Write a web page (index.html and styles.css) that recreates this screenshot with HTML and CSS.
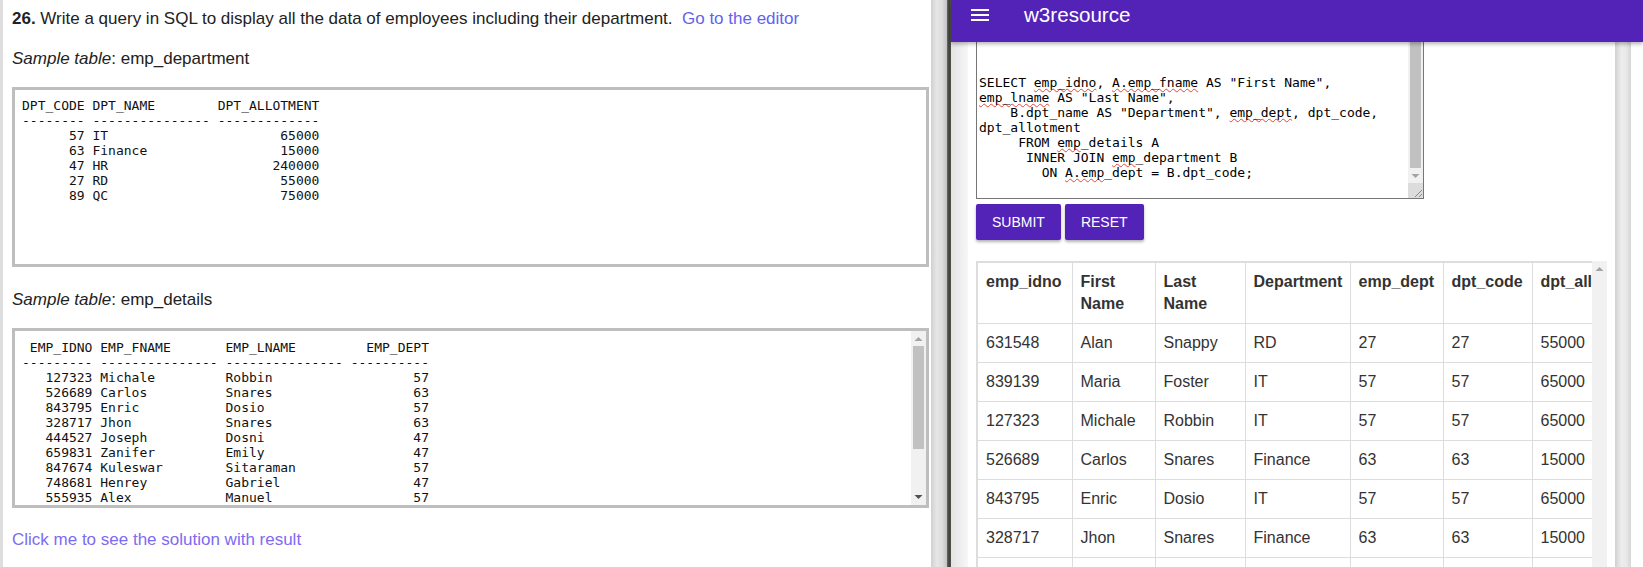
FILE: index.html
```html
<!DOCTYPE html>
<html lang="en">
<head>
<meta charset="utf-8">
<title>SQL exercise 26</title>
<link rel="stylesheet" href="styles.css">
</head>
<body>
<section class="left">
  <p class="q"><b>26.</b> Write a query in SQL to display all the data of employees including their department.&nbsp; <a href="#" class="go-link">Go to the editor</a></p>
  <p class="sample"><i>Sample table</i>: emp_department</p>
  <div class="box"><pre>DPT_CODE DPT_NAME        DPT_ALLOTMENT
-------- --------------- -------------
      57 IT                      65000
      63 Finance                 15000
      47 HR                     240000
      27 RD                      55000
      89 QC                      75000</pre></div>
  <p class="sample two"><i>Sample table</i>: emp_details</p>
  <div class="box two"><pre> EMP_IDNO EMP_FNAME       EMP_LNAME         EMP_DEPT
--------- --------------- --------------- ----------
   127323 Michale         Robbin                  57
   526689 Carlos          Snares                  63
   843795 Enric           Dosio                   57
   328717 Jhon            Snares                  63
   444527 Joseph          Dosni                   47
   659831 Zanifer         Emily                   47
   847674 Kuleswar        Sitaraman               57
   748681 Henrey          Gabriel                 47
   555935 Alex            Manuel                  57
   539569 George          Mardy                   27
   733843 Mario           Saule                   63
   631548 Alan            Snappy                  27
   839139 Maria           Foster                  57</pre><div class="vbar">
      <svg class="arrow" width="15" height="15" viewBox="0 0 15 15"><path d="M3.5 10h8L7.5 6z" fill="#a3a3a3"/></svg>
      <div class="thumb"></div>
      <div class="track"></div>
      <svg class="arrow" width="15" height="15" viewBox="0 0 15 15"><path d="M3.5 5h8L7.5 9z" fill="#505050"/></svg>
    </div></div>
  <p class="solution"><a href="#" class="sol-link">Click me to see the solution with result</a></p>
</section>
<div class="splitter"><div class="grip"></div><div class="edge"></div></div>
<section class="right">
  <header class="topbar">
    <svg class="menu" width="18" height="12" viewBox="0 0 18 12"><rect x="0" y="0" width="18" height="2" fill="#fff"/><rect x="0" y="5" width="18" height="2" fill="#fff"/><rect x="0" y="10" width="18" height="2" fill="#fff"/></svg>
    <span class="brand">w3resource</span>
  </header>
  <div class="rbody">
    <div class="lstrip"></div>
    <main class="main">
      <div class="editor"><div class="code">SELECT <u>emp_idno</u>, <u>A.emp_fname</u> AS "First Name", <u>emp_lname</u> AS "Last Name",
    B.dpt_name AS "Department", <u>emp_dept</u>, dpt_code, dpt_allotment
     FROM <u>emp</u>_details A
      INNER JOIN <u>emp</u>_department B
        ON <u>A.emp</u>_dept = B.dpt_code;</div><div class="vbar">
          <div class="thumb long"></div>
          <svg class="arrow" width="15" height="15" viewBox="0 0 15 15"><path d="M3.5 6h8L7.5 10z" fill="#a3a3a3"/></svg>
          <svg class="resizer" width="15" height="15" viewBox="0 0 15 15"><path d="M14 7L7 14M14 11L11 14" stroke="#8a8a8a" stroke-width="1"/></svg>
        </div></div>
      <div class="actions"><button class="btn">SUBMIT</button><button class="btn">RESET</button></div>
      <div class="results">
        <div class="tview">
          <table>
            <colgroup><col style="width:95px"><col style="width:83px"><col style="width:90px"><col style="width:105px"><col style="width:93px"><col style="width:89px"><col style="width:132px"></colgroup>
            <thead>
              <tr><th>emp_idno</th><th>First Name</th><th>Last Name</th><th>Department</th><th>emp_dept</th><th>dpt_code</th><th>dpt_allotment</th></tr>
            </thead>
            <tbody>
              <tr><td>631548</td><td>Alan</td><td>Snappy</td><td>RD</td><td>27</td><td>27</td><td>55000</td></tr>
              <tr><td>839139</td><td>Maria</td><td>Foster</td><td>IT</td><td>57</td><td>57</td><td>65000</td></tr>
              <tr><td>127323</td><td>Michale</td><td>Robbin</td><td>IT</td><td>57</td><td>57</td><td>65000</td></tr>
              <tr><td>526689</td><td>Carlos</td><td>Snares</td><td>Finance</td><td>63</td><td>63</td><td>15000</td></tr>
              <tr><td>843795</td><td>Enric</td><td>Dosio</td><td>IT</td><td>57</td><td>57</td><td>65000</td></tr>
              <tr><td>328717</td><td>Jhon</td><td>Snares</td><td>Finance</td><td>63</td><td>63</td><td>15000</td></tr>
              <tr><td>444527</td><td>Joseph</td><td>Dosni</td><td>HR</td><td>47</td><td>47</td><td>240000</td></tr>
            </tbody>
          </table>
        </div>
        <div class="vbar">
          <svg class="arrow" width="15" height="15" viewBox="0 0 15 15"><path d="M3.5 10h8L7.5 6z" fill="#a3a3a3"/></svg>
          <div class="track"></div>
        </div>
      </div>
    </main>
    <div class="rstrip"></div>
  </div>
</section>
</body>
</html>
```
FILE: styles.css
```css
* { box-sizing: border-box; }
html, body { margin: 0; height: 567px; overflow: hidden; background: #fff; }
body {
  display: flex;
  font-family: "Liberation Sans", Arial, sans-serif;
  color: #222;
}

/* left exercise panel */
.left {
  width: 931px;
  flex: none;
  border-left: 3px solid #dedede;
  padding: 9px 2px 0 9px;
  font-size: 17px;
  line-height: 20px;
  overflow: hidden;
}
.left p { margin: 0; }
.go-link { color: #6262ee; text-decoration: none; }
.sol-link { color: #7d6bf2; text-decoration: none; }
.sample { margin-top: 20px !important; }
.sample.two { margin-top: 23px !important; }
.solution { margin-top: 22px !important; }

.box {
  margin-top: 18px;
  height: 180px;
  border: 3px solid #bebebe;
  display: flex;
}
.box pre {
  flex: 1;
  margin: 0;
  padding: 7.5px 7px 0;
  font: 13px/15px "DejaVu Sans Mono", monospace;
  color: #111;
  overflow: hidden;
}
.box.two pre { padding-top: 8.5px; }

.vbar {
  width: 15px;
  flex: none;
  background: #f1f1f1;
  display: flex;
  flex-direction: column;
}
.arrow, .resizer { display: block; flex: none; }
.thumb { height: 103px; flex: none; margin: 0 2px; background: #c1c1c1; }
.thumb.long { height: auto; flex: 1; }
.track { flex: 1; }
.resizer { background: #dcdcdc; }

/* splitter */
.splitter { width: 20px; flex: none; display: flex; }
.grip { flex: 1; background: linear-gradient(to right, #d0d0d0, #e6e6e6 35%, #dddddd 70%, #c2c2c2); }
.edge { width: 4px; background: linear-gradient(to right, #6e6e68, #3d3d39, #56564f); }

/* right editor panel */
.right { flex: 1; min-width: 0; display: flex; flex-direction: column; }
.topbar {
  height: 42px;
  flex: none;
  display: flex;
  align-items: center;
  padding: 0 0 12px 20px;
  background: #5322b7;
  color: #fff;
  position: relative;
  z-index: 1;
  box-shadow: 0 2px 4px rgba(0,0,0,.3);
}
.menu { display: block; flex: none; }
.brand { margin-left: 35px; font-size: 20.6px; line-height: 24px; }

.rbody { flex: 1; min-height: 0; display: flex; }
.lstrip { width: 17px; flex: none; background: linear-gradient(to right, #e3e3e3, #f7f7f7); }
.main { width: 647px; flex: none; padding: 0 8px; overflow: hidden; }
.rstrip { width: 16px; flex: none; background: linear-gradient(to right, #d0d0d0, #ededed 40%, #e9e9e9 70%, #d5d5d5); }

.editor {
  width: 448px;
  height: 157px;
  border: 1px solid #767676;
  border-top: 0;
  display: flex;
}
.code {
  flex: 1;
  padding: 33px 0 0 2px;
  font: 13px/15px "DejaVu Sans Mono", monospace;
  color: #000;
  white-space: pre-wrap;
  overflow: hidden;
}
.code u {
  text-decoration: underline wavy #e4463c;
  text-decoration-thickness: 1px;
  text-underline-offset: 1px;
  text-decoration-skip-ink: none;
}

.actions { display: flex; gap: 4px; margin-top: 5px; }
.btn {
  height: 36px;
  padding: 0 16px;
  border: 0;
  border-radius: 2px;
  background: #5322b7;
  color: #fff;
  font: 14px "Liberation Sans", Arial, sans-serif;
  box-shadow: 0 2px 3px rgba(0,0,0,.3);
}

.results { margin-top: 21px; height: 330px; display: flex; }
.tview { width: 616px; flex: none; overflow: hidden; }
table {
  border-collapse: collapse;
  table-layout: fixed;
  width: 687px;
  border: 2px solid #dddddd;
  font-size: 16px;
  line-height: 22px;
  color: #333;
}
th, td {
  border: 1px solid #dddddd;
  padding: 8px;
  text-align: left;
  vertical-align: top;
  white-space: normal;
}
th { font-weight: bold; }
```
